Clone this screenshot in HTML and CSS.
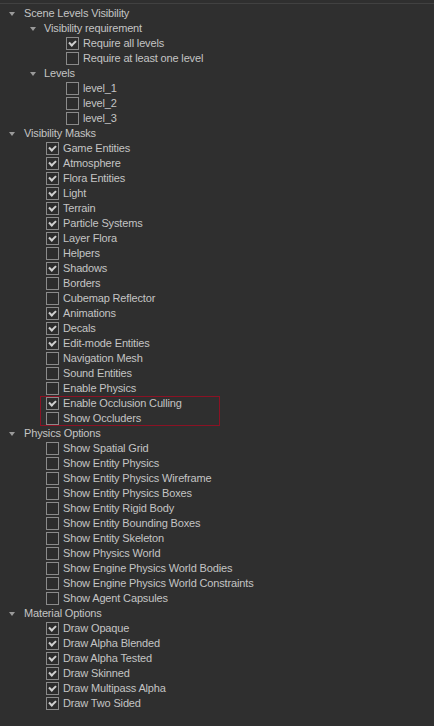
FILE: index.html
```html
<!DOCTYPE html>
<html>
<head>
<meta charset="utf-8">
<link rel="stylesheet" href="styles.css">
</head>
<body>
<div class="panel">
  <div class="row hd d0"><span class="arrow"></span><span class="label">Scene Levels Visibility</span></div>
  <div class="row hd d1"><span class="arrow"></span><span class="label">Visibility requirement</span></div>
  <div class="row leaf d2"><span class="cb on"></span><span class="label">Require all levels</span></div>
  <div class="row leaf d2"><span class="cb"></span><span class="label">Require at least one level</span></div>
  <div class="row hd d1"><span class="arrow"></span><span class="label">Levels</span></div>
  <div class="row leaf d2"><span class="cb"></span><span class="label">level_1</span></div>
  <div class="row leaf d2"><span class="cb"></span><span class="label">level_2</span></div>
  <div class="row leaf d2"><span class="cb"></span><span class="label">level_3</span></div>

  <div class="row hd d0"><span class="arrow"></span><span class="label">Visibility Masks</span></div>
  <div class="row leaf d1"><span class="cb on"></span><span class="label">Game Entities</span></div>
  <div class="row leaf d1"><span class="cb on"></span><span class="label">Atmosphere</span></div>
  <div class="row leaf d1"><span class="cb on"></span><span class="label">Flora Entities</span></div>
  <div class="row leaf d1"><span class="cb on"></span><span class="label">Light</span></div>
  <div class="row leaf d1"><span class="cb on"></span><span class="label">Terrain</span></div>
  <div class="row leaf d1"><span class="cb on"></span><span class="label">Particle Systems</span></div>
  <div class="row leaf d1"><span class="cb on"></span><span class="label">Layer Flora</span></div>
  <div class="row leaf d1"><span class="cb"></span><span class="label">Helpers</span></div>
  <div class="row leaf d1"><span class="cb on"></span><span class="label">Shadows</span></div>
  <div class="row leaf d1"><span class="cb"></span><span class="label">Borders</span></div>
  <div class="row leaf d1"><span class="cb"></span><span class="label">Cubemap Reflector</span></div>
  <div class="row leaf d1"><span class="cb on"></span><span class="label">Animations</span></div>
  <div class="row leaf d1"><span class="cb on"></span><span class="label">Decals</span></div>
  <div class="row leaf d1"><span class="cb on"></span><span class="label">Edit-mode Entities</span></div>
  <div class="row leaf d1"><span class="cb"></span><span class="label">Navigation Mesh</span></div>
  <div class="row leaf d1"><span class="cb"></span><span class="label">Sound Entities</span></div>
  <div class="row leaf d1"><span class="cb"></span><span class="label">Enable Physics</span></div>
  <div class="group-focus">
    <div class="row leaf"><span class="cb on"></span><span class="label">Enable Occlusion Culling</span></div>
    <div class="row leaf"><span class="cb"></span><span class="label">Show Occluders</span></div>
  </div>

  <div class="row hd d0"><span class="arrow"></span><span class="label">Physics Options</span></div>
  <div class="row leaf d1"><span class="cb"></span><span class="label">Show Spatial Grid</span></div>
  <div class="row leaf d1"><span class="cb"></span><span class="label">Show Entity Physics</span></div>
  <div class="row leaf d1"><span class="cb"></span><span class="label">Show Entity Physics Wireframe</span></div>
  <div class="row leaf d1"><span class="cb"></span><span class="label">Show Entity Physics Boxes</span></div>
  <div class="row leaf d1"><span class="cb"></span><span class="label">Show Entity Rigid Body</span></div>
  <div class="row leaf d1"><span class="cb"></span><span class="label">Show Entity Bounding Boxes</span></div>
  <div class="row leaf d1"><span class="cb"></span><span class="label">Show Entity Skeleton</span></div>
  <div class="row leaf d1"><span class="cb"></span><span class="label">Show Physics World</span></div>
  <div class="row leaf d1"><span class="cb"></span><span class="label">Show Engine Physics World Bodies</span></div>
  <div class="row leaf d1"><span class="cb"></span><span class="label">Show Engine Physics World Constraints</span></div>
  <div class="row leaf d1"><span class="cb"></span><span class="label">Show Agent Capsules</span></div>

  <div class="row hd d0"><span class="arrow"></span><span class="label">Material Options</span></div>
  <div class="row leaf d1"><span class="cb on"></span><span class="label">Draw Opaque</span></div>
  <div class="row leaf d1"><span class="cb on"></span><span class="label">Draw Alpha Blended</span></div>
  <div class="row leaf d1"><span class="cb on"></span><span class="label">Draw Alpha Tested</span></div>
  <div class="row leaf d1"><span class="cb on"></span><span class="label">Draw Skinned</span></div>
  <div class="row leaf d1"><span class="cb on"></span><span class="label">Draw Multipass Alpha</span></div>
  <div class="row leaf d1"><span class="cb on"></span><span class="label">Draw Two Sided</span></div>
</div>
</body>
</html>
```
FILE: styles.css
```css
html, body {
  margin: 0;
  padding: 0;
  background: #2f2f2f;
  height: 100%;
}
body {
  padding-top: 3px;
  box-sizing: border-box;
  font-family: "Liberation Sans", Arial, sans-serif;
  font-size: 11px;
  letter-spacing: -0.15px;
  color: #c4c4c4;
}
.panel {
  border-top: 1px solid #414141;
  padding-top: 2px;
}
.row {
  height: 15px;
  display: flex;
  align-items: center;
  white-space: nowrap;
}
.hd.d0 { padding-left: 9px; }
.hd.d1 { padding-left: 30px; }
.leaf.d1 { padding-left: 46px; }
.leaf.d2 { padding-left: 66px; }
.arrow {
  width: 0;
  height: 0;
  border-left: 3.5px solid transparent;
  border-right: 3.5px solid transparent;
  border-top: 4px solid #9a9a9a;
  margin-right: 9px;
  margin-top: 1px;
}
.hd.d1 .arrow { margin-right: 8px; }
.cb {
  width: 11px;
  height: 11px;
  border: 1px solid #8a8a8a;
  background: #2c2c2c;
  margin-right: 4px;
  position: relative;
  flex: none;
}
.cb.on::after {
  content: "";
  position: absolute;
  left: 2px;
  top: 1px;
  width: 5px;
  height: 3px;
  border-left: 2px solid #cfcfcf;
  border-bottom: 2px solid #cfcfcf;
  transform: translate(0, 1px) rotate(-45deg);
  transform-origin: center;
}
.label {
  line-height: 15px;
}
.group-focus {
  width: 180px;
  margin-left: 40px;
  outline: 1px solid #8b1224;
  outline-offset: -1px;
}
.group-focus .leaf {
  padding-left: 6px;
}
```
